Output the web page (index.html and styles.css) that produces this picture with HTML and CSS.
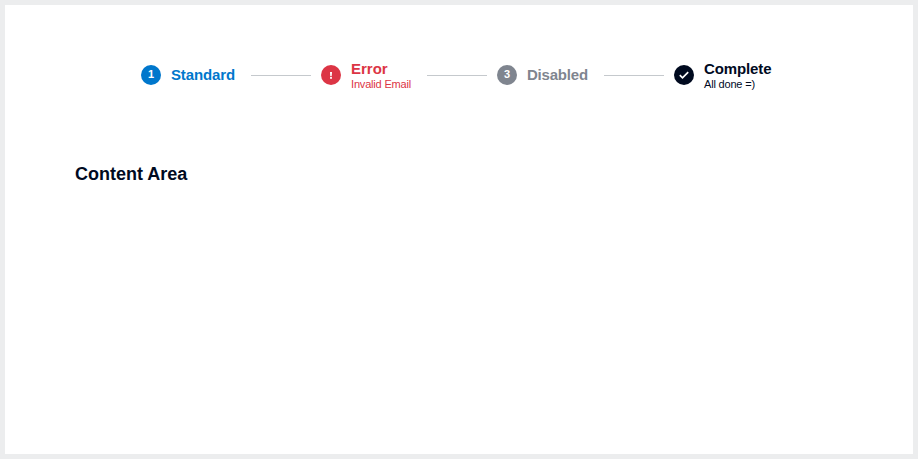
FILE: index.html
```html
<!DOCTYPE html>
<html lang="en">
<head>
<meta charset="utf-8">
<title>Stepper</title>
<link rel="stylesheet" href="styles.css">
</head>
<body>
<main class="page">
  <ol class="stepper">
    <li class="step step-standard">
      <span class="badge">1</span>
      <div class="label"><div class="title">Standard</div></div>
    </li>
    <li class="line"></li>
    <li class="step step-error">
      <span class="badge"><svg viewBox="0 0 20 20" width="20" height="20"><path d="M9 7h2l-.3 4.200H9.300z" fill="#fff"/><rect x="9.100" y="12" width="1.800" height="1.800" fill="#fff"/></svg></span>
      <div class="label"><div class="title">Error</div><div class="note">Invalid Email</div></div>
    </li>
    <li class="line"></li>
    <li class="step step-disabled">
      <span class="badge">3</span>
      <div class="label"><div class="title">Disabled</div></div>
    </li>
    <li class="line"></li>
    <li class="step step-complete">
      <span class="badge"><svg viewBox="0 0 20 20" width="20" height="20"><path d="M5.800 10.200 8.500 12.800 14.200 7.200" fill="none" stroke="#fff" stroke-width="1.700"/></svg></span>
      <div class="label"><div class="title">Complete</div><div class="note">All done =)</div></div>
    </li>
  </ol>
  <h2 class="heading">Content Area</h2>
</main>
</body>
</html>
```
FILE: styles.css
```css
* { box-sizing: border-box; }
body { margin: 0; font-family: "Liberation Sans", Arial, sans-serif; }
.page { height: 459px; border: 5px solid #ecedee; background: #fff; padding: 50px 70px 0; }
.stepper { display: flex; align-items: center; height: 40px; margin: 0; padding: 0 0 0 66px; list-style: none; }
.step { display: flex; align-items: center; gap: 10px; white-space: nowrap; }
.badge { width: 20px; height: 20px; border-radius: 50%; background: currentColor; font-size: 11px; font-weight: 700; line-height: 18px; text-align: center; }
.badge::first-letter { color: #fff; }
.badge svg { display: block; }
.title { font-size: 15px; font-weight: 700; line-height: 18px; letter-spacing: -0.12px; }
.note { font-size: 11px; line-height: 12px; letter-spacing: -0.18px; }
.line { width: 60px; height: 1px; margin: 0 10px 0 16px; background: #c5c9cd; }
.step-standard { width: 94px; color: #0077cc; }
.step-error { width: 90px; color: #dc3545; }
.step-error .title { letter-spacing: 0; }
.step-disabled { width: 91px; color: #7f858f; }
.step-disabled .title { letter-spacing: -0.18px; }
.step-complete { color: #000a1f; }
.heading { margin: 68px 0 0; font-size: 18px; line-height: 22px; color: #000a1f; }
```
